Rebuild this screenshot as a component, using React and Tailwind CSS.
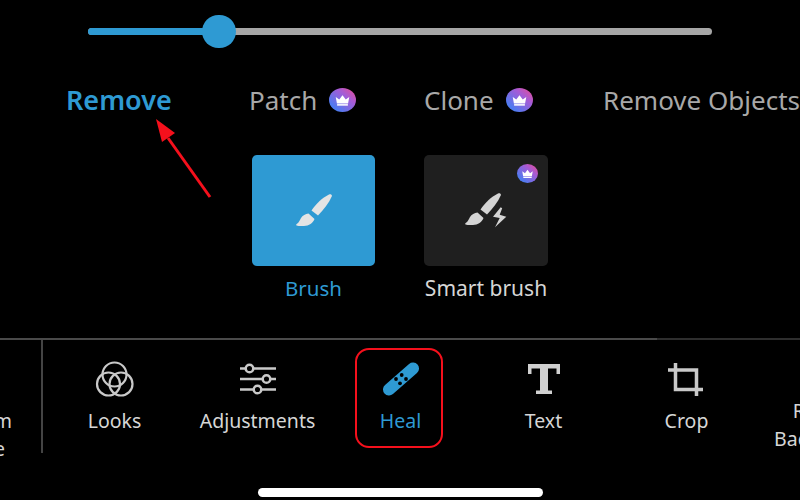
const FONT = "font-['Noto_Sans',sans-serif]";

function Crown({ w = 27, h = 24 }) {
  return (
    <svg width={w} height={h} viewBox="0 0 28 28" preserveAspectRatio="none" className="shrink-0">
      <defs>
        <linearGradient id="cg" x1="0" y1="1" x2="1" y2="0">
          <stop offset="0.2" stopColor="#4f7bf0" />
          <stop offset="0.65" stopColor="#a55bd6" />
          <stop offset="1" stopColor="#ee4a8e" />
        </linearGradient>
      </defs>
      <circle cx="14" cy="14" r="14" fill="url(#cg)" />
      <path d="M7 10.5l3.6 3 3.4-5 3.4 5 3.6-3-1.2 7.5H8.2z" fill="#fff" />
      <rect x="8.4" y="18.8" width="11.2" height="1.8" fill="#fff" />
    </svg>
  );
}

function Tab({ label, crown, active, width, gap }) {
  return (
    <div className={`flex items-center shrink-0 ${width} ${gap}`}>
      <span className={active ? "text-[27px] leading-[32px] font-semibold text-[#2e9ad3]" : "text-[26px] leading-[32px] text-[#a8a8a8]"}>{label}</span>
      {crown && <Crown />}
    </div>
  );
}

const BRUSH_HANDLE = "M33 .6C34.500-.1 36.200.6 35.800 2.300 33 9 28 15 22 21.500L15.500 16.500C20 10 26 4 33 .6z";
const BRUSH_HEAD = "M12.500 19.500L18.500 25C17 29 13 32 8 32 5 32.300 2 32 .5 31.500-.2 31 .3 30 1 29.800 3 29 3.700 26 5 24 6.500 21.500 9.500 20 12.500 19.500z";

function BrushIcon() {
  return (
    <svg width="36" height="33" viewBox="0 0 36 33" fill="#e4e4e4" className="ml-[1px]">
      <path d={BRUSH_HANDLE} />
      <path d={BRUSH_HEAD} />
    </svg>
  );
}

function SmartBrushIcon() {
  return (
    <svg width="42" height="35" viewBox="0 0 42 35" fill="#d4d4d4">
      <path d={BRUSH_HANDLE} />
      <path d={BRUSH_HEAD} />
      <path d="M35.700 14.300L28 23.700l6.700 1.300L30 34.300l11.300-10.600-6.600-2 2.500-6.400z" />
    </svg>
  );
}

function LooksIcon() {
  return (
    <svg width="40" height="36" viewBox="0 0 40 36" fill="none" stroke="#c9c9c9" strokeWidth="2.200">
      <circle cx="19.500" cy="13.500" r="12" />
      <circle cx="13.500" cy="23" r="11.500" />
      <circle cx="26" cy="23" r="11.500" />
    </svg>
  );
}

function AdjustIcon() {
  return (
    <svg width="38" height="32" viewBox="0 0 38 32" fill="none" stroke="#c9c9c9" strokeWidth="2.500">
      <path d="M1 5.500h5.500M14.500 5.500H37M1 16h22.500M31.500 16H37M1 26.500h13.500M22.500 26.500H37" />
      <circle cx="10.500" cy="5.500" r="3.800" />
      <circle cx="27.500" cy="16" r="3.800" />
      <circle cx="18.500" cy="26.500" r="3.800" />
    </svg>
  );
}

function HealIcon() {
  return (
    <svg width="38" height="34" viewBox="0 0 38 34">
      <path d="M31 6.500L7 27.500" stroke="#2e9ad3" strokeWidth="12" strokeLinecap="round" />
      <circle cx="19.700" cy="13" r="1.900" fill="#000" />
      <circle cx="14" cy="17" r="1.900" fill="#000" />
      <circle cx="24" cy="17" r="1.900" fill="#000" />
      <circle cx="18" cy="21.300" r="1.900" fill="#000" />
    </svg>
  );
}

function TextIcon() {
  return (
    <svg width="34" height="32" viewBox="0 0 34 32" fill="#d0d0d0">
      <path d="M1 1h32v10h-3.500V5.500H21V27.500H25V31H9v-3.500h4V5.500H4.500V11H1z" />
    </svg>
  );
}

function CropIcon() {
  return (
    <svg width="40" height="37" viewBox="0 0 40 37" fill="none" stroke="#c9c9c9" strokeWidth="3.500">
      <path d="M1 9h28.500v26" />
      <path d="M8.500 2v26.500H36" />
    </svg>
  );
}

function Tool({ icon, label, active }) {
  return (
    <div className="w-[143px] shrink-0 flex flex-col items-center">
      <div className="h-[44px] flex items-center justify-center">{icon}</div>
      <div className={`mt-[6px] text-[19.500px] leading-[28px] text-center whitespace-nowrap ${active ? "text-[#2e9ad3]" : "text-[#d6d6d6]"}`}>{label}</div>
    </div>
  );
}

export default function App() {
  return (
    <div className={`relative w-[800px] h-[500px] overflow-hidden bg-black flex flex-col ${FONT}`}>
      {/* slider */}
      <div className="h-[62px] flex items-center px-[88px]">
        <div className="flex-1 h-[7px] rounded-full bg-[#a6a6a6] relative">
          <div className="absolute left-0 top-0 h-full w-[131px] rounded-full bg-[#2e9ad3]" />
          <div className="absolute left-[114px] top-[-13px] w-[34px] h-[33px] rounded-full bg-[#2e9ad3]" />
        </div>
      </div>

      {/* tabs */}
      <div className="h-[76px] flex items-center pl-[66px] whitespace-nowrap">
        <Tab label="Remove" active width="w-[183px]" />
        <Tab label="Patch" crown width="w-[175px]" gap="gap-[12px]" />
        <Tab label="Clone" crown width="w-[179px]" gap="gap-[12px]" />
        <Tab label="Remove Objects" />
      </div>

      {/* tools */}
      <div className="mt-[17px] flex pl-[252px] gap-[49px]">
        <div className="w-[123px] flex flex-col items-center">
          <div className="w-[123px] h-[111px] rounded-[5px] bg-[#2e9ad3] flex items-center justify-center">
            <BrushIcon />
          </div>
          <div className="mt-[9px] text-[20.500px] leading-[27px] text-[#2e9ad3] whitespace-nowrap">Brush</div>
        </div>
        <div className="w-[124px] flex flex-col items-center">
          <div className="relative w-[124px] h-[111px] rounded-[5px] bg-[#1f1f1f] flex items-center justify-center">
            <SmartBrushIcon />
            <div className="absolute right-[10px] top-[9px] flex"><Crown w={21} h={19} /></div>
          </div>
          <div className="mt-[9px] text-[21px] leading-[27px] text-[#d6d6d6] whitespace-nowrap">Smart brush</div>
        </div>
      </div>

      {/* toolbar */}
      <div className="mt-[36px] h-[2px] flex shrink-0">
        <div className="w-[657px] bg-[#4a4a4a]" />
        <div className="flex-1 bg-[#2e2e2e]" />
      </div>
      <div className="flex h-[113px] ml-[-101px]">
        <div className="w-[144px] shrink-0 h-[113px] pt-[17px] border-r-2 border-[#444]">
          <div className="w-[142px] flex flex-col items-center">
            <div className="h-[44px]" />
            <div className="mt-[6px] text-[19.500px] leading-[28px] text-center text-[#d6d6d6] whitespace-nowrap">Premium<br />Feature</div>
          </div>
        </div>
        <div className="flex pt-[17px]">
          <Tool icon={<LooksIcon />} label="Looks" />
          <Tool icon={<AdjustIcon />} label="Adjustments" />
          <div className="w-[143px] shrink-0 flex flex-col items-center relative">
            <div className="h-[44px] flex items-center justify-center"><HealIcon /></div>
            <div className="mt-[6px] text-[19.500px] leading-[28px] text-[#2e9ad3]">Heal</div>
            <div className="absolute left-[26px] top-[-9px] w-[88px] h-[100px] rounded-[14px] border-2 border-[#f5101c]" />
          </div>
          <Tool icon={<TextIcon />} label="Text" />
          <Tool icon={<CropIcon />} label="Crop" />
          <Tool icon={<span />} label={<>Remove<br />Background</>} />
        </div>
      </div>

      {/* home indicator */}
      <div className="mt-auto mb-[3px] h-[9px] w-[285px] self-start ml-[258px] rounded-full bg-white" />

      {/* annotation arrow */}
      <svg className="absolute left-[150px] top-[110px]" width="70" height="95" viewBox="0 0 70 95">
        <path d="M60 87L18 28" stroke="#f5101c" strokeWidth="3" fill="none" />
        <path d="M6 9l19 14-13 9z" fill="#f5101c" />
      </svg>
    </div>
  );
}
